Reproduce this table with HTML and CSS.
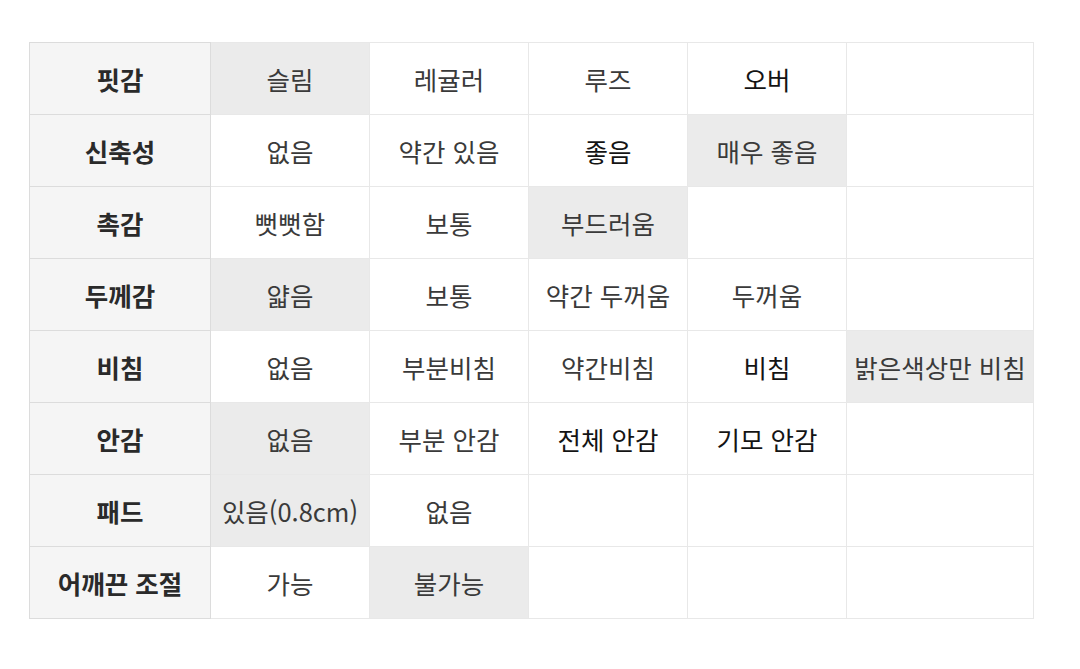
FILE: index.html
```html
<!DOCTYPE html>
<html lang="ko">
<head>
<meta charset="utf-8">
<link rel="stylesheet" href="styles.css">
</head>
<body>
<table class="spec">
  <colgroup>
    <col class="c-head"><col class="c-val"><col class="c-val"><col class="c-val"><col class="c-val"><col class="c-last">
  </colgroup>
  <tr><th>핏감</th><td class="on">슬림</td><td>레귤러</td><td>루즈</td><td class="dark">오버</td><td></td></tr>
  <tr><th>신축성</th><td>없음</td><td>약간 있음</td><td class="dark">좋음</td><td class="on">매우 좋음</td><td></td></tr>
  <tr><th>촉감</th><td>뻣뻣함</td><td>보통</td><td class="on">부드러움</td><td></td><td></td></tr>
  <tr><th>두께감</th><td class="on">얇음</td><td>보통</td><td>약간 두꺼움</td><td>두꺼움</td><td></td></tr>
  <tr><th>비침</th><td>없음</td><td>부분비침</td><td>약간비침</td><td class="dark">비침</td><td class="on">밝은색상만 비침</td></tr>
  <tr><th>안감</th><td class="on">없음</td><td>부분 안감</td><td class="dark">전체 안감</td><td class="dark">기모 안감</td><td></td></tr>
  <tr><th>패드</th><td class="on">있음(0.8cm)</td><td>없음</td><td></td><td></td><td></td></tr>
  <tr><th>어깨끈 조절</th><td>가능</td><td class="on">불가능</td><td></td><td></td><td></td></tr>
</table>
</body>
</html>
```

FILE: styles.css
```css
html, body {
  margin: 0;
  padding: 0;
  background: #ffffff;
}
body {
  padding: 42px 0 0 29px;
  font-family: "Noto Sans CJK KR", "Noto Sans", sans-serif;
}
.spec {
  border-collapse: collapse;
  table-layout: fixed;
  width: 1004px;
}
.c-head { width: 181px; }
.c-val { width: 159px; }
.c-last { width: 187px; }
.spec th,
.spec td {
  height: 71px;
  padding: 0;
  border: 1px solid #e8e8e8;
  text-align: center;
  vertical-align: middle;
  font-size: 25.5px;
  line-height: 1;
  white-space: nowrap;
  color: #3a3a3a;
}
.spec th {
  background: #f5f5f5;
  font-weight: 700;
  color: #2a2a2a;
  border-color: #dcdcdc;
}
.spec td.on {
  background: #ebebeb;
}
.spec td.dark {
  color: #141414;
}
```
